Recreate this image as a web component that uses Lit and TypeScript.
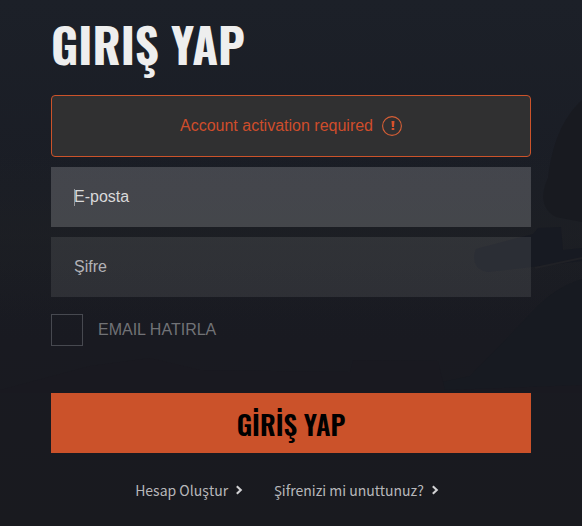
import { LitElement, html, css } from "lit";
import { customElement } from "lit/decorators.js";

const chevron = html`<svg class="chevron" viewBox="0 0 8 10" aria-hidden="true">
  <path d="M1.8 1.2 5.8 5 1.8 8.8" fill="none" stroke="currentColor" stroke-width="2.1" />
</svg>`;

@customElement("app-root")
export class AppRoot extends LitElement {
  static styles = css`
    :host {
      display: block;
      position: relative;
      box-sizing: border-box;
      min-height: 100vh;
      padding: 14px 51px 22px;
      overflow: hidden;
      background: linear-gradient(#1c2028, #1a1d25 35%, #191a21 65%, #191a1f);
      font-family: "Liberation Sans", Arial, sans-serif;
      font-size: 16px;
      line-height: 20px;
      color: #b9babc;
    }
    .scene {
      position: absolute;
      inset: 0;
      width: 100%;
      height: 100%;
    }
    .form {
      position: relative;
      display: flex;
      flex-direction: column;
    }
    .title {
      margin: 0 0 21px;
      font-family: Oswald, "Roboto Condensed", sans-serif;
      font-size: 47px;
      line-height: 60px;
      font-weight: 700;
      color: #eee;
    }
    .alert {
      display: flex;
      align-items: center;
      justify-content: center;
      gap: 9px;
      height: 60px;
      margin-bottom: 10px;
      border: 1px solid #cc532a;
      border-radius: 4px;
      background: #303031;
      color: #cf4d2b;
    }
    .alert-icon {
      width: 20px;
      height: 20px;
    }
    .field {
      position: relative;
      margin-bottom: 10px;
    }
    .input {
      display: block;
      box-sizing: border-box;
      width: 100%;
      height: 60px;
      padding: 0 23px;
      border: 0;
      border-radius: 0;
      outline: 0;
      background: rgba(255, 255, 255, 0.09);
      font: inherit;
      color: #eee;
    }
    .input::placeholder {
      color: #b3b3b7;
      opacity: 1;
    }
    .active .input {
      background: rgba(255, 255, 255, 0.18);
    }
    .active .input::placeholder {
      color: #d9d9da;
    }
    .caret {
      position: absolute;
      left: 23px;
      top: 22px;
      width: 1px;
      height: 17px;
      background: #97979a;
    }
    .remember {
      display: flex;
      align-items: center;
      gap: 15px;
      margin: 7px 0 47px;
      color: #717276;
    }
    .box {
      appearance: none;
      box-sizing: border-box;
      width: 32px;
      height: 32px;
      margin: 0;
      border: 1px solid #474950;
    }
    .submit {
      height: 60px;
      padding: 2px 0 0;
      border: 0;
      background: #cb522a;
      font-family: Oswald, "Roboto Condensed", sans-serif;
      font-size: 27px;
      line-height: 32px;
      font-weight: 600;
      color: #000;
    }
    .links {
      display: flex;
      justify-content: center;
      gap: 31px;
      margin-top: 25px;
      padding-right: 8px;
      font-family: "Noto Sans CJK JP", "Noto Sans", sans-serif;
      font-size: 14px;
      line-height: 24px;
    }
    .link {
      display: flex;
      align-items: center;
      gap: 7px;
      color: #b7b7ba;
      text-decoration: none;
    }
    .chevron {
      width: 8px;
      height: 10px;
      color: #d2d2d4;
    }
  `;

  render() {
    return html`
      <svg class="scene" viewBox="0 0 582 526" preserveAspectRatio="xMidYMid slice" aria-hidden="true">
        <defs>
          <linearGradient id="haze" x1="0" y1="0" x2="0" y2="1">
            <stop offset="0" stop-color="#202224" stop-opacity="0" />
            <stop offset=".5" stop-color="#202224" stop-opacity=".4" />
            <stop offset="1" stop-color="#202224" stop-opacity="0" />
          </linearGradient>
        </defs>
        <path d="M0 150H582V320H0Z" fill="url(#haze)" />
        <path d="M582 100C562 118 552 145 548 178 540 195 542 210 556 217L582 222Z" fill="#181a20" />
        <path d="M476 249 533 234 538 228 561 227 563 250 582 248V261L488 272C474 270 472 258 476 249Z" fill="#171a22" />
        <path d="M582 279C545 291 535 311 510 335L470 376 390 393H582Z" fill="#171a21" />
        <path d="M0 390 90 366 150 358 200 370 350 372 353 360 438 361 445 390 582 385V393H0Z" fill="#191920" />
        <path d="M535 268 582 258" fill="none" stroke="#202126" stroke-width="2" />
      </svg>
      <form class="form" @submit=${(e: Event) => e.preventDefault()}>
        <h1 class="title">GIRIŞ YAP</h1>
        <div class="alert" role="alert">
          <span>Account activation required</span>
          <svg class="alert-icon" viewBox="0 0 20 20" aria-hidden="true">
            <circle cx="10" cy="10" r="9.4" fill="none" stroke="#d75f36" stroke-width="1.1" />
            <path d="M9.5 5h3l-.5 6h-2zM9.7 12h2.6v2H9.7z" fill="#d8512c" />
          </svg>
        </div>
        <div class="field active">
          <input class="input" type="email" name="email" placeholder="E-posta" aria-label="E-posta" />
          <span class="caret"></span>
        </div>
        <div class="field">
          <input class="input" type="password" name="password" placeholder="Şifre" aria-label="Şifre" />
        </div>
        <label class="remember">
          <input class="box" type="checkbox" name="remember" />
          <span>EMAIL HATIRLA</span>
        </label>
        <button class="submit" type="submit">GİRİŞ YAP</button>
        <nav class="links">
          <a class="link" href="#register"><span>Hesap Oluştur</span>${chevron}</a>
          <a class="link" href="#forgot"><span>Şifrenizi mi unuttunuz?</span>${chevron}</a>
        </nav>
      </form>
    `;
  }
}
